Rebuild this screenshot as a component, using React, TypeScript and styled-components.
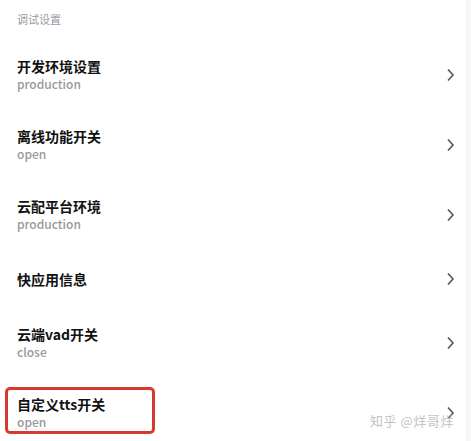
import { createGlobalStyle, styled } from "styled-components";

const GlobalStyle = createGlobalStyle`
  html, body {
    margin: 0;
    padding: 0;
    background: #fff;
  }
  body {
    font-family: "Noto Sans CJK SC", "Noto Sans", sans-serif;
    overflow: hidden;
  }
`;

const Page = styled.div`
  position: relative;
  width: 471px;
  height: 441px;
  overflow: hidden;
  background: #fff;

  &::after {
    content: "";
    position: absolute;
    top: 0;
    right: 0;
    bottom: 0;
    width: 5px;
    background: #f7f7f7;
  }
`;

const SectionTitle = styled.div`
  height: 40px;
  padding: 9px 0 0 17px;
  box-sizing: border-box;
  font-size: 11px;
  line-height: 20px;
  color: #9a9aa4;
`;

const Row = styled.div<{ $height: number }>`
  position: relative;
  height: ${(p) => p.$height}px;
  padding: 0 16px 0 17px;
  display: flex;
  align-items: center;
  justify-content: space-between;
`;

const TextBlock = styled.div`
  display: flex;
  flex-direction: column;
`;

const Title = styled.div`
  font-size: 14px;
  line-height: 18px;
  font-weight: 700;
  color: #111;
`;

const Sub = styled.div`
  font-size: 12px;
  line-height: 18px;
  font-weight: 500;
  color: #999;
`;

const Highlight = styled.div`
  position: absolute;
  left: 5px;
  top: 9px;
  width: 150px;
  height: 47px;
  box-sizing: border-box;
  border: 3px solid #d6392e;
  border-radius: 5px;
`;

const Watermark = styled.div`
  position: absolute;
  left: 370px;
  top: 411px;
  font-size: 13px;
  color: #c4c4c4;
  letter-spacing: 0.5px;
  z-index: 2;
`;

function Chevron() {
  return (
    <svg width="9" height="14" viewBox="0 0 9 14">
      <path d="M2 1.5 L7 7 L2 12.5" fill="none" stroke="#555" strokeWidth="1.6" />
    </svg>
  );
}

const items = [
  { title: "开发环境设置", sub: "production", h: 70 },
  { title: "离线功能开关", sub: "open", h: 70 },
  { title: "云配平台环境", sub: "production", h: 70 },
  { title: "快应用信息", sub: "", h: 58 },
  { title: "云端vad开关", sub: "close", h: 70 },
  { title: "自定义tts开关", sub: "open", h: 70, mark: true },
];

export default function App() {
  return (
    <Page>
      <GlobalStyle />
      <SectionTitle>调试设置</SectionTitle>
      {items.map((it, i) => (
        <Row key={i} $height={it.h}>
          {it.mark && <Highlight />}
          <TextBlock>
            <Title>{it.title}</Title>
            {it.sub && <Sub>{it.sub}</Sub>}
          </TextBlock>
          <Chevron />
        </Row>
      ))}
      <Watermark>知乎 @烊哥烊</Watermark>
    </Page>
  );
}
